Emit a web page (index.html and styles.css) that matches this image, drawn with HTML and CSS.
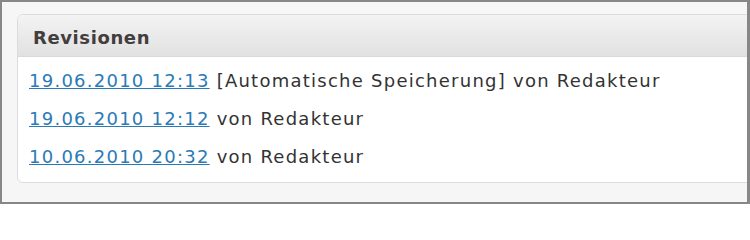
FILE: index.html
```html
<!DOCTYPE html>
<html lang="de">
<head>
<meta charset="utf-8">
<title>Revisionen</title>
<link rel="stylesheet" href="styles.css">
</head>
<body>
<div class="frame">
  <div class="panel">
    <div class="panel-head">Revisionen</div>
    <ul class="revs">
      <li><a href="#">19.06.2010 12:13</a> [Automatische Speicherung] von Redakteur</li>
      <li><a href="#">19.06.2010 12:12</a> von Redakteur</li>
      <li><a href="#">10.06.2010 20:32</a> von Redakteur</li>
    </ul>
  </div>
</div>
</body>
</html>
```
FILE: styles.css
```css
html, body {
  margin: 0;
  padding: 0;
}
body {
  font-family: "DejaVu Sans", Verdana, sans-serif;
  color: #333;
}
.frame {
  box-sizing: border-box;
  width: 750px;
  height: 204px;
  border-style: solid;
  border-color: #878787;
  border-width: 2px 3px 2px 2px;
  background: #f6f6f6;
  overflow: hidden;
  padding: 12px 0 0 15px;
}
.panel {
  width: 760px;
  background: #fff;
  border: 1px solid #dcdcdc;
  border-radius: 6px;
}
.panel-head {
  box-sizing: border-box;
  height: 42px;
  padding: 3px 15px 0;
  display: flex;
  align-items: center;
  font-size: 18px;
  font-weight: bold;
  letter-spacing: 0.6px;
  color: #433d3d;
  background: linear-gradient(#f3f3f3, #e1e1e1);
  border-bottom: 1px solid #d9d9d9;
  border-radius: 6px 6px 0 0;
}
.revs {
  list-style: none;
  margin: 0;
  padding: 5px 11px 6px;
}
.revs li {
  font-size: 18px;
  line-height: 38px;
  letter-spacing: 1.25px;
  white-space: nowrap;
}
.revs a {
  color: #2b7ab6;
  text-decoration: underline;
}
```
